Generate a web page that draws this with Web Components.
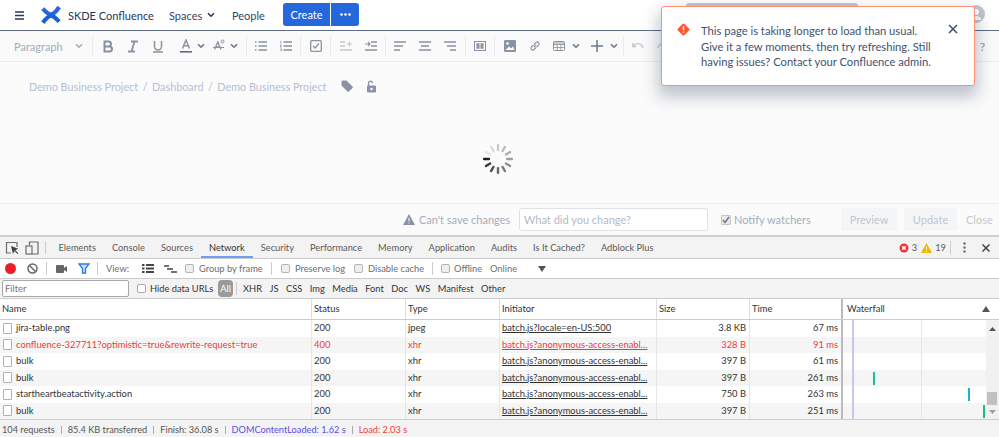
<!DOCTYPE html>
<html lang="en">
<head>
<meta charset="utf-8">
<title>Confluence editor with DevTools</title>
<style>
html,body{margin:0;padding:0;width:999px;height:437px;overflow:hidden;background:#fff}
app-shell{display:block}
</style>
</head>
<body>
<app-shell></app-shell>
<script>
const svg=(w,h,vb,body,extra='')=>`<svg width="${w}" height="${h}" viewBox="${vb}" ${extra} aria-hidden="true">${body}</svg>`;
const def=(name,html,setup)=>customElements.define(name,class extends HTMLElement{
  constructor(){super();const s=this.attachShadow({mode:'open'});s.innerHTML=typeof html==='function'?html(this):html;if(setup)setup(s,this);}
});
const chev=(c='#6b778c')=>svg(8,6,'0 0 8 6',`<path d="M1 1.2 4 4.2 7 1.2" fill="none" stroke="${c}" stroke-width="1.6"/>`);
const TOP='"Lato","Noto Sans",sans-serif';

/* ---------- Confluence header ---------- */
def('cf-header',`<style>
:host{display:flex;align-items:center;height:30px;box-sizing:border-box;background:#fff;font:11px ${TOP};color:#344563}
.burger{margin-left:15px;display:flex}
.logo{margin-left:17px;display:flex}
.brand{margin-left:7px;color:#253858;white-space:nowrap;width:101px}
.nav{color:#344563;white-space:nowrap}
.spaces{display:flex;align-items:center;gap:5px;width:63px}
.people{width:51px}
.create{display:flex;height:23px;margin-top:-2px}
button{border:0;background:#2468dc;color:#fff;font:11px ${TOP};padding:0;height:23px}
.c{width:47px;border-radius:3px 0 0 3px}
.m{width:28px;margin-left:1px;border-radius:0 3px 3px 0;display:flex;align-items:center;justify-content:center}
.right{margin-left:auto;display:flex;align-items:center}
.avatar{margin-right:14px;margin-top:-2px;display:flex}
</style>
<span class="burger">${svg(9,9,'0 0 9 9','<path d="M0 1h9M0 4.500h9M0 8h9" stroke="#253858" stroke-width="1.500"/>')}</span>
<span class="logo">${svg(20,20,'0 0 20 20','<path d="M1.800 3.600C5.500 7.800 7.600 9.300 10 9.300S14.500 7.500 18.200 2" fill="none" stroke="#2a67de" stroke-width="4.200"/><path d="M1.800 17.600C5.500 12.800 7.600 10.800 10 10.800S14.500 12.600 18.200 16.600" fill="none" stroke="#1f5fdb" stroke-width="4.200"/>')}</span>
<span class="brand">SKDE Confluence</span>
<span class="nav spaces">Spaces ${chev('#253858')}</span>
<span class="nav people">People</span>
<span class="create"><button class="c">Create</button><button class="m" aria-label="More">${svg(11,3,'0 0 11 3','<circle cx="1.500" cy="1.500" r="1.300" fill="#fff"/><circle cx="5.500" cy="1.500" r="1.300" fill="#fff"/><circle cx="9.500" cy="1.500" r="1.300" fill="#fff"/>')}</button></span>
<span class="right"><span class="avatar">${svg(18,18,'0 0 18 18','<circle cx="9" cy="9" r="9" fill="#c1c7d0"/><circle cx="9" cy="7" r="3" fill="#fff"/><path d="M3.500 15c1-3 3-4 5.500-4s4.500 1 5.500 4z" fill="#fff"/>')}</span></span>`);

/* ---------- Editor toolbar ---------- */
const G='#8993a4',L='#c1c7d0';
const ic={
 bold:svg(12,13,'0 0 12 13',`<path d="M2.500 1.500h4a2.500 2.500 0 0 1 0 5h-4zM2.500 6.500h5a2.500 2.500 0 0 1 0 5h-5z" fill="none" stroke="${G}" stroke-width="2"/>`),
 ital:svg(12,13,'0 0 12 13',`<path d="M4 1.500h7M1 11.500h7M7.500 1.500 4.500 11.500" fill="none" stroke="${G}" stroke-width="1.800"/>`),
 und:svg(12,13,'0 0 12 13',`<path d="M2.500 1v5.500a3.500 3.500 0 0 0 7 0V1M1 12h10" fill="none" stroke="${G}" stroke-width="1.500"/>`),
 a:svg(12,14,'0 0 12 14',`<path d="M2.500 9.500 6 1l3.500 8.500M3.700 6.800h4.600" fill="none" stroke="${G}" stroke-width="1.500"/><path d="M0 12.800h12" stroke="#5e6c84" stroke-width="1.600"/>`),
 ac:svg(12,14,'0 0 12 14',`<path d="M1.500 10.500 4.800 3l3.200 7.500M2.500 8h4.600" fill="none" stroke="${G}" stroke-width="1.300"/><circle cx="9.500" cy="2.500" r="1.500" fill="none" stroke="${G}"/><path d="M0 8.500h11" stroke="${G}"/>`),
 ul:svg(12,10,'0 0 12 10',`<path d="M3.500 1h8.500M3.500 5h8.500M3.500 9h8.500" stroke="${G}" stroke-width="1.300"/><path d="M0 1h1.500M0 5h1.500M0 9h1.500" stroke="${G}" stroke-width="1.500"/>`),
 ol:svg(12,10,'0 0 12 10',`<path d="M3.500 1h8.500M3.500 5h8.500M3.500 9h8.500" stroke="${G}" stroke-width="1.300"/><path d="M0 .6h1v2M0 4h1.500L0 6h1.500M0 8h1.500v2H0" fill="none" stroke="${G}" stroke-width=".8"/>`),
 chk:svg(12,12,'0 0 12 12',`<rect x=".7" y=".7" width="10.600" height="10.600" rx="1" fill="none" stroke="${G}" stroke-width="1.300"/><path d="M3 6l2 2 4-4.500" fill="none" stroke="${G}" stroke-width="1.300"/>`),
 out:svg(12,10,'0 0 12 10',`<path d="M0 1h5M0 9h12M0 5h5" stroke="${L}" stroke-width="1.300"/><path d="M7 3h5M9.500 .5v5" stroke="${L}" stroke-width="1.200"/>`),
 ind:svg(12,10,'0 0 12 10',`<path d="M6 1h6M0 9h12M6 5h6" stroke="${G}" stroke-width="1.300"/><path d="M0 3h5M3 1l2 2-2 2" fill="none" stroke="${G}" stroke-width="1.200"/>`),
 al:svg(12,10,'0 0 12 10',`<path d="M0 1h12M0 5h9M0 9h6" stroke="${G}" stroke-width="1.400"/>`),
 ac2:svg(12,10,'0 0 12 10',`<path d="M0 1h12M2 5h8M0 9h12" stroke="${G}" stroke-width="1.400"/>`),
 ar:svg(12,10,'0 0 12 10',`<path d="M0 1h12M3 5h9M6 9h6" stroke="${G}" stroke-width="1.400"/>`),
 lay:svg(12,10,'0 0 12 10',`<rect x=".5" y=".5" width="11" height="9" fill="none" stroke="${G}"/><rect x="2.500" y="2.200" width="3" height="5.600" fill="${G}"/><rect x="6.500" y="2.200" width="3" height="5.600" fill="${G}"/>`),
 img:svg(12,12,'0 0 12 12',`<rect width="12" height="12" rx="1.200" fill="${G}"/><circle cx="3.500" cy="3.500" r="1.300" fill="#fff"/><path d="M1.500 10 5 6.500 7 8.500 9 6.500 10.500 10z" fill="#fff"/>`),
 link:svg(12,12,'0 0 12 12',`<path d="M5 7 7 5M4.500 5 2 7.500a2 2 0 0 0 2.500 2.500L7 7.500M5 4.500 7.500 2A2 2 0 0 1 10 4.500L7.500 7" fill="none" stroke="${G}" stroke-width="1.100"/>`),
 tbl:svg(12,10,'0 0 12 10',`<rect x=".5" y=".5" width="11" height="9" rx="1" fill="none" stroke="${G}"/><path d="M.5 3.500h11M.5 6.500h11M4.200 3.500v6M7.800 3.500v6" stroke="${G}" stroke-width=".8"/><rect x=".5" y=".5" width="11" height="3" fill="${G}" opacity=".45"/>`),
 plus:svg(12,12,'0 0 12 12',`<path d="M6 0v12M0 6h12" stroke="#6b778c" stroke-width="1.500"/>`),
 undo:svg(12,8,'0 0 12 8',`<path d="M1 4c3-3.500 8-3.500 10.500 2M.8 1v3.500h3.500" fill="none" stroke="${L}" stroke-width="1.300"/>`),
 redo:svg(12,8,'0 0 12 8',`<path d="M11 4C8 .5 3 .5.500 6M11.200 1v3.500H7.700" fill="none" stroke="${L}" stroke-width="1.300"/>`)
};
const b=k=>`<span class="b">${ic[k]}</span>`;
def('cf-toolbar',`<style>
:host{display:flex;align-items:center;height:32px;box-sizing:border-box;background:#fafafa;border-top:1.5px solid #5e6c84;border-bottom:1px solid #ebecf0;font:11px ${TOP};color:#a5adba}
.sel{width:78px;margin-left:14px;display:flex;align-items:center;justify-content:space-between;padding-right:9px;box-sizing:border-box}
.s{width:1px;height:20px;background:#ebecf0;flex:none}
.b{width:25px;display:flex;justify-content:center;flex:none}
.d{width:38px;display:flex;justify-content:center;align-items:center;gap:5px;box-sizing:border-box;flex:none}
.q{margin-left:auto;margin-right:14px;color:#8993a4;font-size:12px}
</style>
<span class="sel">Paragraph ${chev('#a5adba')}</span><span class="s"></span>
<span style="width:2px"></span>${b('bold')}${b('ital')}${b('und')}
<span class="d" style="padding-left:6px">${ic.a}${chev()}</span><span class="d" style="padding-right:4px">${ic.ac}${chev()}</span><span class="s"></span>
<span style="width:1px"></span>${b('ul')}${b('ol')}<span style="width:2px"></span><span class="s"></span>
<span style="width:2px"></span>${b('chk')}<span style="width:2px"></span><span class="s"></span>
<span style="width:2px"></span>${b('out')}${b('ind')}<span style="width:2px"></span><span class="s"></span>
<span style="width:1px"></span>${b('al')}${b('ac2')}${b('ar')}<span style="width:3px"></span><span class="s"></span>
<span style="width:1px"></span>${b('lay')}<span style="width:2px"></span><span class="s"></span>
<span style="width:2px"></span>${b('img')}${b('link')}
<span class="d" style="gap:7px">${ic.tbl}${chev()}</span><span class="d" style="gap:7px">${ic.plus}${chev()}</span><span class="s"></span>
<span style="width:1px"></span>${b('undo')}${b('redo')}
<span class="q">?</span>`);

/* ---------- Editor body ---------- */
def('cf-editor',()=>{
 let sp='';
 const cols=['#e6e6e6','#dcdcdc','#c8c8c8','#bdbdbd','#aeaeae','#a0a0a0','#8e8e8e','#7a7a7a','#666','#505050','#3a3a3a','#1f1f1f'];
 for(let i=0;i<12;i++){const a=-60+i*30;sp+=`<rect x="-1.200" y="-15" width="2.400" height="7" rx="1" fill="${cols[i]}" transform="rotate(${a})"/>`;}
 return `<style>
:host{display:flex;flex-direction:column;height:141px;box-sizing:border-box;background:#fbfbfb;font:10.8px ${TOP};color:#b3bfd3}
.crumbs{display:flex;align-items:center;height:20px;margin-top:14px;margin-left:29px;white-space:nowrap}
.sl{margin:0 4.5px;color:#b3bac5}
.tag{margin-left:14px;display:flex}.lock{margin-left:13px;display:flex}
.spin{margin-top:47px;align-self:center;margin-left:-4px;display:flex}
</style>
<div class="crumbs"><span>Demo Business Project</span><span class="sl">/</span><span>Dashboard</span><span class="sl">/</span><span>Demo Business Project</span>
<span class="tag">${svg(12,12,'0 0 12 12','<path d="M.5 1.500a1 1 0 0 1 1-1h4l6 6a1 1 0 0 1 0 1.400l-3.600 3.600a1 1 0 0 1-1.400 0l-6-6z" fill="#8993a4"/>')}</span>
<span class="lock">${svg(11,13,'0 0 11 13','<path d="M2.500 6V3.200a2 2 0 0 1 4 0" fill="none" stroke="#8993a4" stroke-width="1.300"/><rect x="1" y="5.500" width="9" height="7" rx="1" fill="#8993a4"/><circle cx="5.500" cy="9" r="1.300" fill="#fbfbfb"/>')}</span></div>
<div class="spin">${svg(32,32,'-16 -16 32 32',sp)}</div>`;
});

/* ---------- Save bar ---------- */
def('cf-savebar',`<style>
:host{display:flex;align-items:center;height:34px;box-sizing:border-box;background:#fbfbfb;border-top:1px solid #ededed;border-bottom:2px solid #cfcfcf;font:11px ${TOP};color:#a5adba;padding-left:403px}
.w{display:flex;margin-right:4px}
.t{white-space:nowrap;width:100px}
.in{width:189px;height:23px;box-sizing:border-box;border:1px solid #dfe1e6;border-radius:3px;background:#fff;padding:3px 4px;color:#b3bac5;line-height:15px;margin-right:13px;white-space:nowrap}
.cb{width:8px;height:8px;border:1px solid #c1c7d0;background:#e8e8e8;margin-right:3px;display:flex;border-radius:1px}
.n{white-space:nowrap;width:107px}
.p{height:23px;display:flex;align-items:center;justify-content:center;background:#f4f5f7;color:#c1c7d0;border-radius:3px;margin-right:7px}
.close{color:#c1c7d0;margin-left:2px}
</style>
<span class="w">${svg(12,11,'0 0 12 11','<path d="M6 0 12 11H0z" fill="#8993a4"/><path d="M6 4v3.500M6 8.500v1" stroke="#fbfbfb" stroke-width="1.100"/>')}</span>
<span class="t">Can't save changes</span>
<span class="in">What did you change?</span>
<span class="cb">${svg(8,8,'0 0 8 8','<path d="M1 4l2 2.500L7 1" fill="none" stroke="#6b778c" stroke-width="1.500"/>')}</span>
<span class="n">Notify watchers</span>
<span class="p" style="width:56px">Preview</span><span class="p" style="width:53px">Update</span><span class="close">Close</span>`);

/* ---------- Warning flag ---------- */
def('cf-flag',`<style>
:host{position:absolute;left:661px;top:6px;width:314px;height:80px;box-sizing:border-box;background:#fff;border:1px solid #ff8f73;border-radius:3px;box-shadow:0 8px 16px 3px rgba(9,30,66,.25);font:11.2px/15.6px ${TOP};color:#42526e;display:flex;padding:16px 0 0 15px}
.i{display:flex;margin-right:11px;height:14px}
.tx{width:240px}
.x{margin-left:7px;display:flex;height:14px;margin-top:1px}
</style>
<span class="i">${svg(13,13,'0 0 13 13','<rect x="1.900" y="1.900" width="9.200" height="9.200" rx="1.500" transform="rotate(45 6.500 6.500)" fill="#ff5630"/><path d="M6.500 3.200v4M6.500 8.500v1.300" stroke="#fff" stroke-width="1.500"/>')}</span>
<span class="tx">This page is taking longer to load than usual. Give it a few moments, then try refreshing. Still having issues? Contact your Confluence admin.</span>
<span class="x">${svg(10,10,'0 0 10 10','<path d="M1 1l8 8M9 1l-8 8" stroke="#42526e" stroke-width="1.600"/>')}</span>`);

def('cf-search',`<style>:host{position:absolute;left:686px;top:3px;width:172px;height:4px;background:#c4c7cc;border-radius:3px 3px 0 0}</style>`);

/* ---------- DevTools ---------- */
const DF='font:9.3px "Lato","Open Sans",sans-serif;color:#424242;';
const D='#6e6e6e';
def('dt-tabs',`<style>
:host{display:flex;align-items:center;height:22px;box-sizing:border-box;background:#f3f3f3;border-bottom:1px solid #ccc;${DF}}
.ib{display:flex;margin-left:5px}
.s{width:1px;height:13px;background:#ccc;flex:none}
.t{height:21px;display:flex;align-items:center;padding:0 8px;box-sizing:border-box;white-space:nowrap;color:#5a5a5a}
.on{color:#333;border-bottom:2px solid #6fa0ef;padding-top:2px}
.r{margin-left:auto;display:flex;align-items:center;color:#5a5a5a}
</style>
<span class="ib">${svg(14,14,'0 0 14 14',`<path d="M6 12H1.500V1.500H12V6" fill="none" stroke="${D}" stroke-width="1.200"/><path d="M6 5l2 8 1.500-3 3 3 .8-.8-3-3 3-1.500z" fill="#444"/>`)}</span>
<span class="ib" style="margin-left:6px">${svg(14,14,'0 0 14 14',`<path d="M4.500 4V1h8.500v12H7" fill="none" stroke="${D}" stroke-width="1.200"/><rect x="1" y="5" width="6" height="8" fill="none" stroke="${D}" stroke-width="1.200"/>`)}</span>
<span class="s" style="margin-left:6px;margin-right:4.500px"></span>
<span class="t">Elements</span><span class="t">Console</span><span class="t">Sources</span><span class="t on">Network</span><span class="t">Security</span><span class="t">Performance</span><span class="t">Memory</span><span class="t">Application</span><span class="t">Audits</span><span class="t">Is It Cached?</span><span class="t">Adblock Plus</span>
<span class="r">${svg(10,10,'0 0 10 10','<circle cx="5" cy="5" r="4.500" fill="#e8383a"/><path d="M3.200 3.200l3.600 3.600M6.800 3.200 3.200 6.800" stroke="#fff" stroke-width="1.300"/>')}<span style="margin:0 4px 0 3px">3</span>
${svg(11,10,'0 0 11 10','<path d="M5.500 0 11 10H0z" fill="#f4b400"/><path d="M5.500 3.500v3.500M5.500 8v1" stroke="#fff" stroke-width="1"/>')}<span style="margin-left:3px">19</span>
<span class="s" style="margin:0 0 0 4px"></span>
<span style="margin-left:12px;display:flex">${svg(3,11,'0 0 3 11',`<circle cx="1.500" cy="1.500" r="1.200" fill="${D}"/><circle cx="1.500" cy="5.500" r="1.200" fill="${D}"/><circle cx="1.500" cy="9.500" r="1.200" fill="${D}"/>`)}</span>
<span style="margin:0 9px 0 16px;display:flex">${svg(8,8,'0 0 8 8','<path d="M.5.5l7 7M7.500.5l-7 7" stroke="#444" stroke-width="1.500"/>')}</span></span>`);

def('dt-tools',`<style>
:host{display:flex;align-items:center;height:20px;box-sizing:border-box;background:#fff;border-bottom:1px solid #ccc;${DF}color:#6e6e6e}
.s{width:1px;height:13px;background:#ccc;flex:none}
.c{width:9px;height:9px;border:1px solid #b5b5b5;border-radius:2px;background:#eee;flex:none;box-sizing:border-box}
.f{display:flex;flex:none}
span{white-space:nowrap}
</style>
<span class="f" style="margin-left:5px">${svg(11,11,'0 0 11 11','<circle cx="5.500" cy="5.500" r="5.500" fill="#ee1c25"/>')}</span>
<span class="f" style="margin-left:11px">${svg(11,11,'0 0 11 11','<circle cx="5.500" cy="5.500" r="4.500" fill="none" stroke="#666" stroke-width="1.500"/><path d="M2.500 2.500l6 6" stroke="#666" stroke-width="1.500"/>')}</span>
<span class="s" style="margin-left:8px"></span>
<span class="f" style="margin-left:9px">${svg(11,8,'0 0 11 8','<rect width="8" height="8" rx="1" fill="#666"/><path d="M8 3 11 1v6L8 5z" fill="#666"/>')}</span>
<span class="f" style="margin-left:11px">${svg(12,11,'0 0 12 11','<path d="M1 1h10L7.500 5.500v4.500h-3V5.500z" fill="#cfe2fb" stroke="#2b7de9" stroke-width="1.400"/>')}</span>
<span class="s" style="margin-left:7px"></span>
<span style="margin-left:8px;width:28px">View:</span>
<span class="f" style="margin-left:8px">${svg(12,9,'0 0 12 9','<path d="M0 1h2.500M0 4.500h2.500M0 8h2.500M4 1h8M4 4.500h8M4 8h8" stroke="#444" stroke-width="1.800"/>')}</span>
<span class="f" style="margin-left:10px">${svg(13,8,'0 0 13 8','<path d="M0 1h5M3 4h6M7 7h6" stroke="#444" stroke-width="1.300"/>')}</span>
<span class="c" style="margin-left:8px"></span><span style="margin-left:5px;width:65px">Group by frame</span>
<span class="s" style="margin-left:7px"></span>
<span class="c" style="margin-left:9px"></span><span style="margin-left:5px;width:54px">Preserve log</span>
<span class="c" style="margin-left:5px"></span><span style="margin-left:5px;width:57px">Disable cache</span>
<span class="s" style="margin-left:7px"></span>
<span class="c" style="margin-left:8px"></span><span style="margin-left:4px;width:28px">Offline</span>
<span style="margin-left:8px;width:27px">Online</span>
<span class="f" style="margin-left:21px">${svg(8,6,'0 0 8 6','<path d="M0 0h8L4 6z" fill="#555"/>')}</span>`);

def('dt-filter',`<style>
:host{display:flex;align-items:center;height:20px;box-sizing:border-box;background:#f3f3f3;border-bottom:1px solid #ccc;${DF}color:#333}
.in{margin-left:2px;width:127px;height:17px;box-sizing:border-box;border:1px solid #a9a9a9;border-radius:2px;background:#fff;padding-left:2px;color:#757575;line-height:15px}
.c{width:9px;height:9px;border:1px solid #aaa;border-radius:2px;background:#fff;flex:none;box-sizing:border-box}
.h{margin-left:4px;white-space:nowrap;width:68px}
.all{background:#9a9a9a;color:#fff;border-radius:4px;height:17px;width:15px;display:flex;align-items:center;justify-content:center}
.s{width:1px;height:13px;background:#ccc;margin:0 6px 0 3px}
.l{display:flex;gap:7.500px;white-space:nowrap}
</style>
<span class="in">Filter</span><span class="c" style="margin-left:8px"></span><span class="h">Hide data URLs</span><span class="all">All</span><span class="s"></span>
<span class="l"><span>XHR</span><span>JS</span><span>CSS</span><span>Img</span><span>Media</span><span>Font</span><span>Doc</span><span>WS</span><span>Manifest</span><span>Other</span></span>`);

const INIT='batch.js?anonymous-access-enabl...';
const rows=[
 ['jira-table.png','200','jpeg','batch.js?locale=en-US:500','3.8 KB','67 ms',853,2,'#1a85d6'],
 ['confluence-327711?optimistic=true&rewrite-request=true','400','xhr',INIT,'328 B','91 ms',853,2,'#1a85d6',1],
 ['bulk','200','xhr',INIT,'397 B','61 ms',853,2,'#1a85d6'],
 ['bulk','200','xhr',INIT,'397 B','261 ms',874,2,'#1abc9c'],
 ['startheartbeatactivity.action','200','xhr',INIT,'750 B','263 ms',969,2,'#1ab5c9'],
 ['bulk','200','xhr',INIT,'397 B','251 ms',984,2,'#14c47c']
];
const esc=s=>s.replace(/&/g,'&amp;');
def('dt-table',()=>{
 let r='';
 rows.forEach((x,i)=>{
  r+=`<div class="row ${i%2?'alt':''} ${x[9]?'err':''}">
  <span class="n"><i></i>${esc(x[0])}</span><span>${x[1]}</span><span>${x[2]}</span><span class="u">${x[3]}</span><span class="num">${x[4]}</span><span class="num">${x[5]}</span>
  <span class="wf"><b style="left:${x[6]-844}px;width:${x[7]}px;background:${x[8]}"></b></span></div>`;
 });
 return `<style>
:host{display:block;background:#fff;${DF}font-size:9.4px;color:#333;height:120px;overflow:hidden}
.head,.row{display:grid;grid-template-columns:312px 94px 94px 157px 93px 93px 1fr;align-items:center}
.head{height:21px;border-bottom:1px solid #ccc;box-sizing:border-box}
.head span{height:20px;line-height:20px;padding-left:2px;border-right:1px solid #ddd;box-sizing:border-box;min-width:0}
.head span:nth-child(7){border-right:0;position:relative;padding-left:4px}
.head span:nth-child(6){border-right:2px solid #bbb}
.body{height:99px;position:relative;overflow:hidden}
.row{height:16.5px}
.row span{height:100%;line-height:16.5px;padding:0 2px;box-sizing:border-box;border-right:1px solid #e6e6e6;white-space:nowrap;overflow:hidden;min-width:0}
.alt{background:#f5f5f5}
.err{color:#ee3b3b}
.n{display:flex;align-items:center;gap:4px}
.n i{width:9px;height:11px;border:1px solid #b0b0b0;border-radius:1px;background:#fff;flex:none;margin-left:1px;box-sizing:border-box}
.u{text-decoration:underline}
.num{text-align:right;padding-right:3px!important}
.row span:nth-child(6){border-right:2px solid #bbb;padding-right:3px!important}
.wf{position:relative;border-right:0!important;padding:0!important;background-image:linear-gradient(#e6e6e6,#e6e6e6);background-size:1px 100%;background-position:78px 0;background-repeat:no-repeat;overflow:visible!important}
.wf b{position:absolute;top:2px;height:13px}
.nav{position:absolute;left:852px;top:0;width:1px;height:100%;background:#cfc4f5}
.ln{position:absolute;left:853px;top:0;width:1px;height:100%;background:#f3b6c4}
.sb{position:absolute;right:0;top:0;width:13px;height:100%;background:#f1f1f1}
.sb .th{position:absolute;left:1px;right:2px;top:72px;height:13px;background:#c1c1c1}
.sb .up,.sb .dn{position:absolute;left:3px;display:flex}
.sb .up{top:7px}.sb .dn{bottom:5px}
</style>
<div class="head"><span>Name</span><span>Status</span><span>Type</span><span>Initiator</span><span>Size</span><span>Time</span><span>Waterfall<em style="position:absolute;right:9px;top:7px;display:flex">${svg(8,6,'0 0 8 6','<path d="M0 6h8L4 0z" fill="#555"/>')}</em></span></div>
<div class="body">${r}
<div class="nav"></div><div class="ln"></div>
<div class="sb"><span class="up">${svg(7,4,'0 0 7 4','<path d="M0 4h7L3.500 0z" fill="#555"/>')}</span><span class="th"></span><span class="dn">${svg(7,4,'0 0 7 4','<path d="M0 0h7L3.500 4z" fill="#a0a0a0"/>')}</span></div></div>`;
});

def('dt-status',`<style>
:host{display:flex;align-items:center;height:18px;box-sizing:border-box;background:#f3f3f3;border-top:1px solid #ccc;${DF}font-size:9.2px;color:#555;padding:2px 0 0 2px;white-space:nowrap}
.s{width:1px;height:8px;background:#aaa;margin:0 6px}
.b{color:#5c4ee8}.r{color:#ee3b3b}
</style>
<span>104 requests</span><span class="s"></span><span>85.4 KB transferred</span><span class="s"></span><span>Finish: 36.08 s</span><span class="s"></span><span class="b">DOMContentLoaded: 1.62 s</span><span class="s"></span><span class="r">Load: 2.03 s</span>`);

def('dt-panel',`<style>:host{display:block}</style><dt-tabs></dt-tabs><dt-tools></dt-tools><dt-filter></dt-filter><dt-table></dt-table><dt-status></dt-status>`);

def('app-shell',`<style>:host{display:block;position:relative;width:999px;height:437px;overflow:hidden}</style>
<cf-header></cf-header><cf-toolbar></cf-toolbar><cf-editor></cf-editor><cf-savebar></cf-savebar><dt-panel></dt-panel>
<cf-search></cf-search><cf-flag></cf-flag>`);
</script>
</body>
</html>
